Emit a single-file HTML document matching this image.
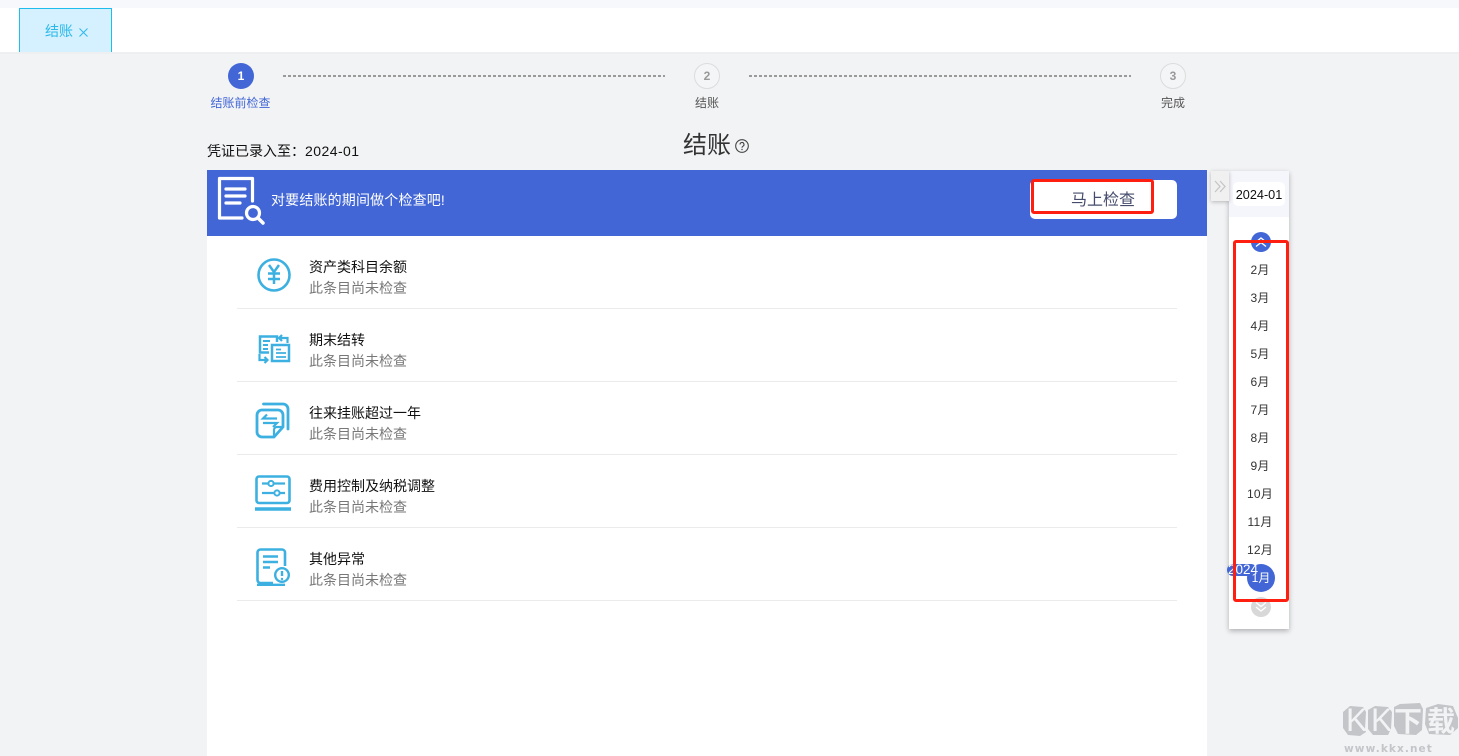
<!DOCTYPE html>
<html lang="zh">
<head>
<meta charset="utf-8">
<title>结账</title>
<style>
*{box-sizing:border-box}
html,body{margin:0;padding:0}
body{width:1459px;height:756px;overflow:hidden;background:#f2f3f5;position:relative;font-family:"Liberation Sans","Noto Sans CJK SC",sans-serif;color:#000}
.a{position:absolute;white-space:nowrap}
.stepc{position:absolute;width:26px;height:26px;border-radius:50%;top:63px;text-align:center;line-height:24px;font-size:12px;font-weight:bold;color:#999;border:1px solid #dcdcdc;background:#f4f5f7}
.dash{position:absolute;top:75px;height:2px;width:382px;background:repeating-linear-gradient(90deg,#9a9a9a 0 3px,transparent 3px 5px)}
.steplabel{position:absolute;top:95px;font-size:12px;line-height:17px;color:#555;text-align:center;white-space:nowrap}
.t1{position:absolute;left:309px;font-size:14px;line-height:18px;color:#111;white-space:nowrap}
.t2{position:absolute;left:309px;font-size:14px;line-height:20px;color:#777;white-space:nowrap}
.ln{position:absolute;left:237px;width:940px;height:1px;background:#ebebeb}
.m{position:absolute;left:1230px;width:60px;text-align:center;font-size:12px;line-height:18px;letter-spacing:.2px;color:#333;white-space:nowrap}
svg{position:absolute;overflow:visible}
.ic{fill:none;stroke:#3cb0e0;stroke-width:2}
</style>
</head>
<body>
<!-- top bars -->
<div class="a" style="left:0;top:0;width:1459px;height:8px;background:#f7f8fc"></div>
<div class="a" style="left:0;top:8px;width:1459px;height:44px;background:#fff"></div>
<div class="a" style="left:0;top:52px;width:1459px;height:2px;background:#eeeff1"></div>
<div class="a" style="left:19px;top:8px;width:93px;height:44px;background:#d5f1ff;border:1px solid #1fbcec;border-bottom:0"></div>
<div class="a" style="left:45px;top:21px;font-size:14px;line-height:20px;color:#2cb8ea">结账</div>
<svg style="left:79px;top:28px" width="9" height="9" viewBox="0 0 9 9"><path d="M.5.5l8 8M8.500.5l-8 8" stroke="#2cb8ea" stroke-width="1" fill="none"/></svg>

<!-- stepper -->
<div class="stepc" style="left:228px;background:#4266d6;border:0;color:#fff;line-height:26px">1</div>
<div class="dash" style="left:283px"></div>
<div class="stepc" style="left:694px">2</div>
<div class="dash" style="left:749px"></div>
<div class="stepc" style="left:1160px">3</div>
<div class="steplabel" style="left:210.500px;color:#4266d6">结账前检查</div>
<div class="steplabel" style="left:695px">结账</div>
<div class="steplabel" style="left:1161px">完成</div>

<div class="a" style="left:207px;top:141px;font-size:14px;line-height:20px;color:#111">凭证已录入至：<span style="letter-spacing:.45px">2024-01</span></div>
<div class="a" style="left:683px;top:130px;font-size:24px;line-height:32px;color:#333">结账</div>
<svg style="left:735px;top:139px" width="14" height="14" viewBox="0 0 14 14"><circle cx="7" cy="7" r="6.300" fill="none" stroke="#444" stroke-width="1.100"/><path d="M5 5.500a2 2 0 1 1 3 1.700c-.7.400-1 .8-1 1.500" fill="none" stroke="#444" stroke-width="1.100"/><circle cx="7" cy="10.500" r=".7" fill="#444"/></svg>

<!-- main panel -->
<div class="a" style="left:207px;top:170px;width:1000px;height:586px;background:#fff"></div>
<div class="a" style="left:207px;top:170px;width:1000px;height:66px;background:#4266d6"></div>
<svg style="left:217px;top:176px" width="50" height="48" viewBox="0 0 50 48">
<path d="M35.500 25V2.500H2.500V42H25" fill="none" stroke="#fff" stroke-width="3.200" stroke-linejoin="round" stroke-linecap="round"/>
<path d="M9 13h19M9 20h19M9 27h14" stroke="#fff" stroke-width="3.200" stroke-linecap="round" fill="none"/>
<circle cx="36" cy="37" r="6.500" fill="none" stroke="#fff" stroke-width="3.200"/>
<path d="M41 42l5 5" stroke="#fff" stroke-width="3.500" stroke-linecap="round"/>
</svg>
<div class="a" style="left:271px;top:190px;font-size:14px;line-height:20px;color:#fff;letter-spacing:.16px">对要结账的期间做个检查吧!</div>
<div class="a" style="left:1030px;top:180px;width:147px;height:39px;background:#fff;border-radius:5px"></div>
<div class="a" style="left:1071px;top:189px;font-size:16px;line-height:24px;color:#454c6b">马上检查</div>
<div class="a" style="left:1031px;top:179px;width:123px;height:35px;border:3px solid #ff1f10;border-radius:3px"></div>

<!-- rows -->
<svg style="left:257px;top:258px" width="34" height="34" viewBox="0 0 34 34" class="ic"><circle cx="17" cy="17" r="15.500" stroke-width="2.600"/><path d="M12 7l5 7 5-7M11 15.500h12M11 21h12M17 14v12" stroke-width="2.500"/></svg>
<div class="t1" style="top:258px">资产类科目余额</div>
<div class="t2" style="top:278px">此条目尚未检查</div>
<div class="ln" style="top:308px"></div>

<svg style="left:258px;top:333px" width="32" height="30" viewBox="0 0 32 30" class="ic"><path d="M11 19.500H2V3.500h17v5.500" stroke-width="2.500"/><path d="M5 8h7M5 12h5M5 16h5" stroke-width="2"/><rect x="14" y="12" width="17" height="16" fill="#fff" stroke-width="2.500"/><path d="M18 16.500h5M18 20h10M18 24h10" stroke-width="1.800"/><path d="M24 2l-3 3 3 3M21 5h8.500v5" stroke-width="2.200"/><path d="M1.500 21v6H9M6.500 24l3 3-3 3" stroke-width="2.200"/></svg>
<div class="t1" style="top:331px">期末结转</div>
<div class="t2" style="top:351px">此条目尚未检查</div>
<div class="ln" style="top:381px"></div>

<svg style="left:256px;top:402px" width="34" height="36" viewBox="0 0 34 36" class="ic"><path d="M7.500 2H27a5 5 0 0 1 5 5V27" stroke-width="2.800" stroke-linecap="round"/><path d="M18 35H6a5 5 0 0 1-5-5V13a5 5 0 0 1 5-5h16a5 5 0 0 1 5 5v12z" stroke-width="2.800"/><path d="M18 35v-7a3 3 0 0 1 3-3h6" stroke-width="2.200"/><path d="M11 12.500L7 16.500h14M7 21h14l-4 4" stroke-width="2.200"/></svg>
<div class="t1" style="top:404px">往来挂账超过一年</div>
<div class="t2" style="top:424px">此条目尚未检查</div>
<div class="ln" style="top:454px"></div>

<svg style="left:255px;top:475px" width="36" height="36" viewBox="0 0 36 36" class="ic"><rect x="1.500" y="1.500" width="33" height="26.500" rx="2.500" stroke-width="2.600"/><path d="M7 8.500h23M7 18h23" stroke-width="2.200"/><circle cx="16" cy="8.500" r="2.600" fill="#fff" stroke-width="2"/><circle cx="22" cy="18" r="2.600" fill="#fff" stroke-width="2"/><path d="M0 34h36" stroke-width="3.400"/></svg>
<div class="t1" style="top:477px">费用控制及纳税调整</div>
<div class="t2" style="top:497px">此条目尚未检查</div>
<div class="ln" style="top:527px"></div>

<svg style="left:256px;top:548px" width="34" height="38" viewBox="0 0 34 38" class="ic"><path d="M17 35H4.500a3 3 0 0 1-3-3V4.500a3 3 0 0 1 3-3H26a3 3 0 0 1 3 3V18" stroke-width="2.600"/><path d="M7 8.500h15M7 14h15M7 19.500h7" stroke-width="2.400"/><circle cx="26" cy="27" r="6.800" fill="#fff" stroke-width="2.400"/><path d="M26 23v5" stroke-width="2.400"/><circle cx="26" cy="31" r="1.200" fill="#3cb0e0" stroke="none"/><path d="M1 36.800h28" stroke-width="2.400"/></svg>
<div class="t1" style="top:550px">其他异常</div>
<div class="t2" style="top:570px">此条目尚未检查</div>
<div class="ln" style="top:600px"></div>

<!-- side month panel -->
<div class="a" style="left:1229px;top:171px;width:60px;height:458px;background:#fff;box-shadow:0 2px 5px rgba(0,0,0,.28)"></div>
<div class="a" style="left:1229px;top:171px;width:60px;height:46px;background:#f5f6fc"></div>
<div class="a" style="left:1233px;top:182px;width:52px;height:24px;background:#fff;border-radius:5px"></div>
<div class="a" style="left:1229px;top:186px;width:60px;text-align:center;font-size:12.700px;line-height:18px;color:#111">2024-01</div>
<div class="a" style="left:1211px;top:171px;width:18px;height:30px;background:#f0f0f0;box-shadow:0 1px 4px rgba(0,0,0,.25)"></div>
<svg style="left:1214px;top:180px" width="12" height="13" viewBox="0 0 12 13"><path d="M1 1l5 5.500-5 5.500M6 1l5 5.500-5 5.500" fill="none" stroke="#c4c4c4" stroke-width="1.200"/></svg>

<div class="a" style="left:1251px;top:232px;width:20px;height:20px;border-radius:50%;background:#4266d6"></div>
<svg style="left:1255px;top:236px" width="12" height="12" viewBox="0 0 12 12"><path d="M1 6l5-4 5 4M1 10.500l5-4 5 4" fill="none" stroke="#fff" stroke-width="1.300"/></svg>

<div class="m" style="top:261px">2月</div>
<div class="m" style="top:289px">3月</div>
<div class="m" style="top:317px">4月</div>
<div class="m" style="top:345px">5月</div>
<div class="m" style="top:373px">6月</div>
<div class="m" style="top:401px">7月</div>
<div class="m" style="top:429px">8月</div>
<div class="m" style="top:457px">9月</div>
<div class="m" style="top:485px">10月</div>
<div class="m" style="top:513px">11月</div>
<div class="m" style="top:541px">12月</div>

<div class="a" style="left:1227px;top:564px;width:30px;height:12px;border-radius:6px;background:#4266d6"></div>
<div class="a" style="left:1247px;top:564px;width:28px;height:28px;border-radius:50%;background:#4266d6"></div>
<div class="a" style="left:1228px;top:562px;font-size:13.500px;line-height:16px;color:#fff">2024</div>
<div class="a" style="left:1247px;top:569px;width:28px;text-align:center;font-size:12px;line-height:18px;color:#fff">1月</div>

<div class="a" style="left:1251px;top:597px;width:20px;height:20px;border-radius:50%;background:#d8d8d8"></div>
<svg style="left:1255px;top:601px" width="12" height="12" viewBox="0 0 12 12"><path d="M1 1.500l5 4 5-4M1 6l5 4 5-4" fill="none" stroke="#fff" stroke-width="1.300"/></svg>

<!-- red annotation -->
<div class="a" style="left:1233px;top:240px;width:56px;height:362px;border:3px solid #ff1f10;border-radius:3px"></div>

<!-- watermark -->
<svg style="left:1342px;top:702px" width="117" height="36" viewBox="0 0 117 36">
<path d="M1 10l7-6 13 1 3 5-1 17 1 3-6 4-12-1-5-7z" fill="#c3c5c8"/>
<path d="M26 8l7-4 13 1 4 5-1 17-3 6-15 0-5-6z" fill="#c3c5c8"/>
<path d="M52 5l6-3 20-1 3 6-1 21-6 5-18-1-4-8z" fill="#c3c5c8"/>
<path d="M84 6l12-4 15 2 5 12 0 10-8 7-21-1-4-10z" fill="#c3c5c8"/>
<text x="4" y="29" font-family="Liberation Sans" font-size="32" fill="#f2f3f5">K</text>
<text x="29" y="29" font-family="Liberation Sans" font-size="32" fill="#f2f3f5">K</text>
<text x="52" y="29" font-family="Noto Sans CJK SC" font-size="28" font-weight="bold" fill="#f2f3f5">下</text>
<text x="85" y="29" font-family="Noto Sans CJK SC" font-size="28" font-weight="bold" fill="#f2f3f5">载</text>
</svg>
<div class="a" style="left:1344px;top:742px;line-height:14px;font-weight:bold;letter-spacing:1.100px;color:#c3c5c8;font-family:'DejaVu Sans',sans-serif;font-size:10.500px">www.kkx.net</div>
</body>
</html>
